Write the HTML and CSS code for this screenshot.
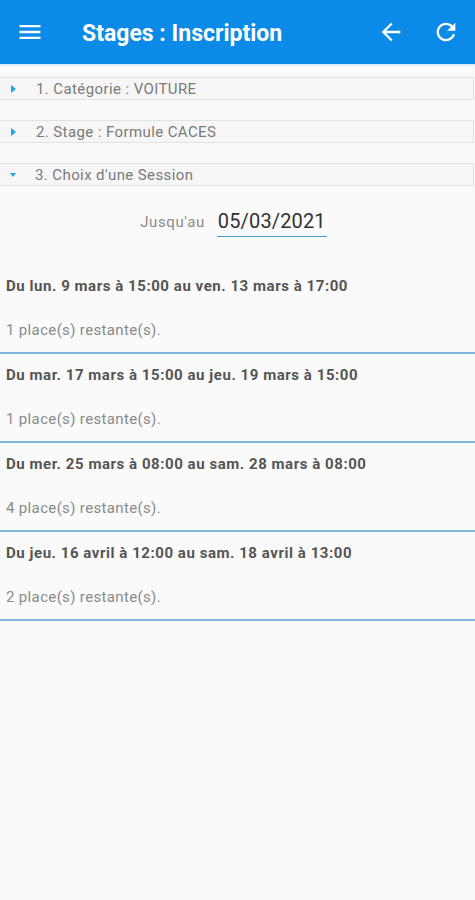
FILE: index.html
```html
<!DOCTYPE html>
<html lang="fr">
<head>
<meta charset="utf-8">
<title>Stages : Inscription</title>
<link rel="stylesheet" href="styles.css">
</head>
<body>
<header class="toolbar">
  <svg class="icon menu" viewBox="0 0 24 24"><path d="M3 18h18v-2H3v2zm0-5h18v-2H3v2zm0-7v2h18V6H3z"/></svg>
  <h1 class="title">Stages : Inscription</h1>
  <div class="actions">
    <svg class="icon" viewBox="0 0 24 24"><path d="M20 11H7.83l5.59-5.59L12 4l-8 8 8 8 1.41-1.41L7.83 13H20v-2z"/></svg>
    <svg class="icon" viewBox="0 0 24 24"><path d="M17.65 6.35C16.2 4.9 14.21 4 12 4c-4.42 0-7.99 3.58-7.99 8s3.57 8 7.99 8c3.73 0 6.84-2.55 7.73-6h-2.08c-.82 2.33-3.040 4-5.65 4-3.31 0-6-2.69-6-6s2.69-6 6-6c1.66 0 3.14.69 4.22 1.78L13 11h7V4l-2.35 2.35z"/></svg>
  </div>
</header>

<main class="content">
  <div class="step"><span class="caret right"></span><span class="step-label">1. Catégorie : VOITURE</span></div>
  <div class="step"><span class="caret right"></span><span class="step-label">2. Stage : Formule CACES</span></div>
  <div class="step"><span class="caret down"></span><span class="step-label">3. Choix d'une Session</span></div>

  <div class="until">
    <span class="until-label">Jusqu'au</span>
    <span class="until-date">05/03/2021</span>
  </div>

  <ul class="sessions">
    <li class="session">
      <div class="session-title">Du lun. 9 mars à 15:00 au ven. 13 mars à 17:00</div>
      <div class="session-places">1 place(s) restante(s).</div>
    </li>
    <li class="session">
      <div class="session-title">Du mar. 17 mars à 15:00 au jeu. 19 mars à 15:00</div>
      <div class="session-places">1 place(s) restante(s).</div>
    </li>
    <li class="session">
      <div class="session-title">Du mer. 25 mars à 08:00 au sam. 28 mars à 08:00</div>
      <div class="session-places">4 place(s) restante(s).</div>
    </li>
    <li class="session">
      <div class="session-title">Du jeu. 16 avril à 12:00 au sam. 18 avril à 13:00</div>
      <div class="session-places">2 place(s) restante(s).</div>
    </li>
  </ul>
</main>
</body>
</html>
```

FILE: styles.css
```css
* { box-sizing: border-box; }

html, body {
  margin: 0;
  padding: 0;
  background: #fafafa;
  font-family: Roboto, "Liberation Sans", Arial, sans-serif;
}

.toolbar {
  height: 64px;
  background: #0c8ae7;
  display: flex;
  align-items: center;
  padding: 0 15px 0 16px;
  color: #fff;
  box-shadow: 0 1px 2px rgba(12, 138, 231, 0.25);
}

.icon {
  width: 28px;
  height: 28px;
  fill: #fff;
  flex: none;
}

.title {
  margin: 3px 0 0 38px;
  font-size: 23px;
  font-weight: 700;
  line-height: 28px;
}

.actions {
  margin-left: auto;
  display: flex;
  gap: 27px;
}

.content {
  padding-top: 13px;
}

.step {
  height: 23px;
  margin: 0 1px 20px 0;
  background: #f6f6f6;
  border: 1px solid #e2e2e2;
  border-left: none;
  display: flex;
  align-items: center;
}

.caret {
  width: 0;
  height: 0;
  flex: none;
}

.caret.right {
  margin-left: 11px;
  border-top: 4px solid transparent;
  border-bottom: 4px solid transparent;
  border-left: 5px solid #24a6e4;
  margin-right: 20px;
}

.caret.down {
  margin-left: 10px;
  border-left: 3.5px solid transparent;
  border-right: 3.5px solid transparent;
  border-top: 4.5px solid #24a6e4;
  margin-right: 19px;
}

.step-label {
  font-size: 15px;
  letter-spacing: 0.4px;
  color: #7a7a7a;
}

.until {
  display: flex;
  justify-content: center;
  align-items: center;
  gap: 12px;
  margin-top: 11px;
  padding-right: 8px;
}

.until-label {
  font-size: 15px;
  letter-spacing: 0.6px;
  color: #8a8a8a;
}

.until-date {
  font-size: 20px;
  letter-spacing: 0.15px;
  color: #333;
  line-height: 30px;
  padding: 0 1px;
  border-bottom: 1.5px solid #4a9ed0;
}

.sessions {
  list-style: none;
  margin: 28px 0 0;
  padding: 0;
}

.session {
  height: 89px;
  padding: 11px 6px 0;
  border-bottom: 2px solid #7db8dc;
}

.session-title {
  font-size: 15px;
  font-weight: 700;
  letter-spacing: 0.55px;
  color: #555;
  line-height: 20px;
  white-space: nowrap;
}

.session-places {
  margin-top: 24px;
  font-size: 15px;
  letter-spacing: 0.35px;
  color: #8a8a8a;
  line-height: 20px;
}
```
